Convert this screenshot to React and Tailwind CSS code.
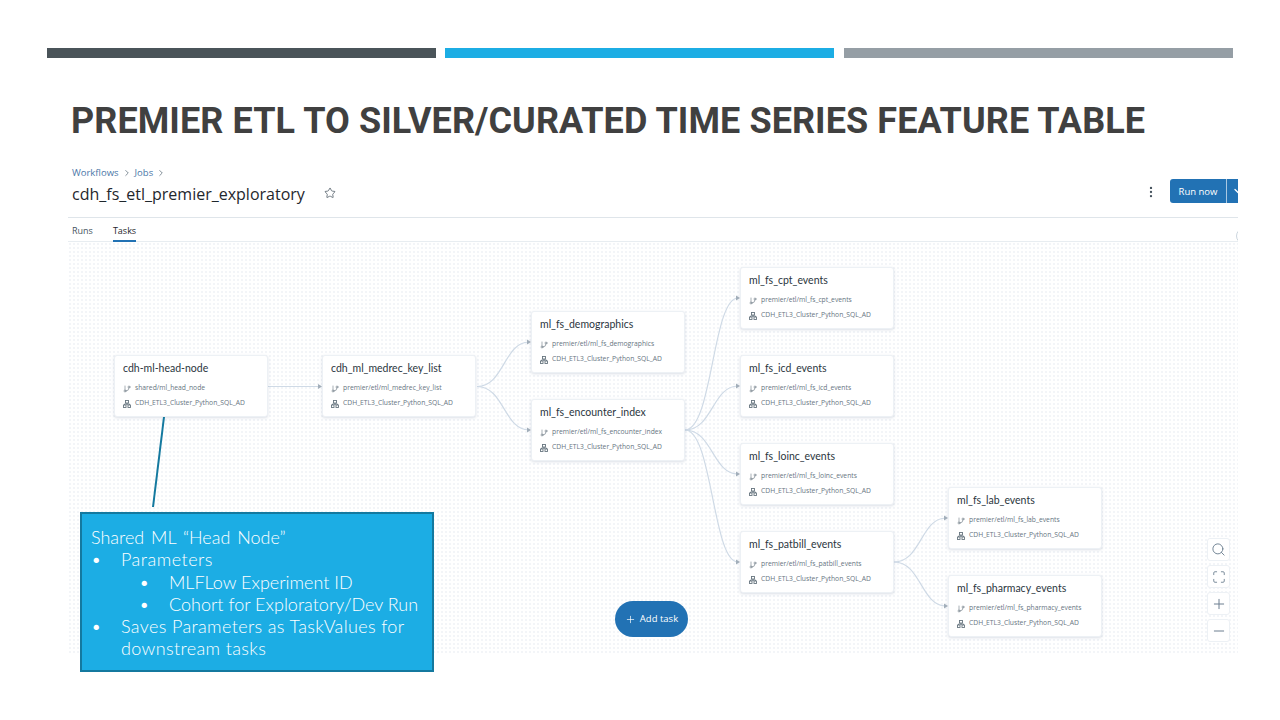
import { Plus, Minus, Search, Maximize, Star, EllipsisVertical, ChevronDown, ChevronRight, GitBranch } from "lucide-react";

const tasks = [
    { name: "cdh-ml-head-node", path: "shared/ml_head_node", pos: "left-[46px] top-[113px]" },
    { name: "cdh_ml_medrec_key_list", path: "premier/etl/ml_medrec_key_list", pos: "left-[254px] top-[113px]" },
    { name: "ml_fs_demographics", path: "premier/etl/ml_fs_demographics", pos: "left-[463px] top-[69px]" },
    { name: "ml_fs_encounter_index", path: "premier/etl/ml_fs_encounter_index", pos: "left-[463px] top-[157px]" },
    { name: "ml_fs_cpt_events", path: "premier/etl/ml_fs_cpt_events", pos: "left-[672px] top-[25px]" },
    { name: "ml_fs_icd_events", path: "premier/etl/ml_fs_icd_events", pos: "left-[672px] top-[113px]" },
    { name: "ml_fs_loinc_events", path: "premier/etl/ml_fs_loinc_events", pos: "left-[672px] top-[201px]" },
    { name: "ml_fs_patbill_events", path: "premier/etl/ml_fs_patbill_events", pos: "left-[672px] top-[289px]" },
    { name: "ml_fs_lab_events", path: "premier/etl/ml_fs_lab_events", pos: "left-[880px] top-[245px]" },
    { name: "ml_fs_pharmacy_events", path: "premier/etl/ml_fs_pharmacy_events", pos: "left-[880px] top-[333px]" },
];

// source right edge -> target left edge, canvas coordinates
const edges = [
    [200, 144.5, 254, 144.5],
    [409, 144.5, 463, 100],
    [409, 144.5, 463, 188],
    [617, 188, 672, 56],
    [617, 188, 672, 144],
    [617, 188, 672, 232],
    [617, 188, 672, 320],
    [826, 320, 880, 276],
    [826, 320, 880, 364],
];

function ClusterIcon() {
    return (
        <svg className="size-[8px] shrink-0" viewBox="0 0 8 8" fill="none" stroke="currentColor" strokeWidth="0.9">
            <rect x="2.5" y="0.5" width="3" height="2.5" />
            <path d="M4 3V5M1.5 5V4H6.5V5" />
            <rect x="0.5" y="5" width="2.5" height="2.5" />
            <rect x="5" y="5" width="2.5" height="2.5" />
        </svg>
    );
}

function TaskNode({ name, path, pos }) {
    return (
        <div className={`absolute ${pos} flex h-[62px] w-[154px] flex-col rounded-[3px] border border-[#edf1f5] bg-white pl-[8px] shadow-[0_1px_3px_rgba(90,110,140,0.22)]`}>
            <div className="mt-[5px] font-['Lato',sans-serif] text-[10.5px] leading-[14px] text-[#2b3640]">{name}</div>
            <div className="mt-[6px] flex h-[15px] items-center gap-[4px] text-[6.75px] text-[#67757f]">
                <GitBranch className="size-[8px] shrink-0" strokeWidth={1.75} />
                <span>{path}</span>
            </div>
            <div className="flex h-[15px] items-center gap-[4px] text-[6.75px] text-[#67757f]">
                <ClusterIcon />
                <span>CDH_ETL3_Cluster_Python_SQL_AD</span>
            </div>
        </div>
    );
}

function Edges() {
    return (
        <svg className="absolute left-0 top-0 h-[420px] w-[1170px]" fill="none">
            {edges.map(([x1, y1, x2, y2], i) => {
                const mid = (x1 + x2) / 2;
                return (
                    <g key={i}>
                        <path d={`M${x1} ${y1}C${mid} ${y1} ${mid} ${y2} ${x2 - 2} ${y2}`} stroke="#cfdae6" strokeWidth="1.2" />
                        <path d={`M${x2 - 4} ${y2 - 2.5}L${x2} ${y2}L${x2 - 4} ${y2 + 2.5}Z`} fill="#a3afba" />
                    </g>
                );
            })}
        </svg>
    );
}

function ZoomButton({ children }) {
    return (
        <button className="flex size-[23px] items-center justify-center rounded-[3px] border border-[#edf1f5] bg-white text-[#6c7f90]">
            {children}
        </button>
    );
}

export default function App() {
    return (
        <div className="relative h-[720px] w-[1280px] overflow-hidden bg-white font-['Open_Sans',sans-serif]">
            <div className="flex gap-[9px] pl-[47px] pt-[48px]">
                <div className="h-[10px] w-[389px] bg-[#4a5459]" />
                <div className="h-[10px] w-[389px] bg-[#1cade4]" />
                <div className="ml-px h-[10px] w-[389px] bg-[#959ea5]" />
            </div>

            <h1 className="ml-[71px] mt-[41px] h-[44px] whitespace-nowrap font-['Roboto',sans-serif] text-[36px] font-bold leading-[44px] tracking-[0.08px] text-[#404040]">
                PREMIER ETL TO SILVER/CURATED TIME SERIES FEATURE TABLE
            </h1>

            <div className="ml-[68px] mt-[21px] flex h-[489px] w-[1170px] flex-col overflow-hidden">
                <div className="flex h-[54px] shrink-0 justify-between border-b border-[#dfe5ea] pl-[4px]">
                    <div className="pt-px">
                        <div className="flex h-[16px] items-center text-[9.5px] text-[#4b77a8]">
                            <span>Workflows</span>
                            <ChevronRight className="mx-[3px] size-[10px] text-[#6b7a86]" />
                            <span>Jobs</span>
                            <ChevronRight className="mx-[3px] size-[10px] text-[#6b7a86]" />
                        </div>
                        <div className="mt-px flex items-center">
                            <span className="text-[16px] leading-[24px] text-[#1f272d]">cdh_fs_etl_premier_exploratory</span>
                            <Star className="ml-[19px] size-[12px] -translate-y-px text-[#46535e]" strokeWidth={1.5} />
                        </div>
                    </div>
                    <div className="flex items-start pt-[15px]">
                        <EllipsisVertical className="mr-[12px] mt-[6px] size-[14px] text-[#46535e]" />
                        <div className="flex h-[24px] w-[68px] shrink-0 overflow-hidden rounded-l-[3px] bg-[#2272b4] text-white">
                            <span className="w-[57px] shrink-0 border-r border-[#a9c8e2] text-center text-[9.5px] leading-[26px]">Run now</span>
                            <ChevronDown className="ml-[5px] mt-[6px] size-[12px] shrink-0" strokeWidth={2.5} />
                        </div>
                    </div>
                </div>

                <div className="relative flex h-[24px] shrink-0 gap-[20px] border-b border-[#e8edf1] pl-[4px] text-[9px] leading-[25px]">
                    <span className="text-[#46535e]">Runs</span>
                    <span className="h-[24px] border-b-2 border-[#2272b4] text-[#1f272d]">Tasks</span>
                    <div className="absolute -right-[14px] top-[10px] size-[16px] rounded-full border border-[#ccd6de] bg-white" />
                </div>

                <div className="relative flex-1 bg-[radial-gradient(#f3f5f8_1px,transparent_1px)] bg-[size:4px_4px]">
                    <Edges />
                    {tasks.map((task) => (
                        <TaskNode key={task.name} {...task} />
                    ))}
                    <button className="absolute left-[547px] top-[359px] flex h-[36px] w-[73px] items-center justify-center gap-[4px] rounded-full bg-[#2272b4] text-[9.5px] text-white">
                        <Plus className="size-[11px]" strokeWidth={1.5} />
                        Add task
                    </button>
                    <div className="absolute left-[1139px] top-[296px] flex flex-col gap-[4px]">
                        <ZoomButton><Search className="size-[15px]" strokeWidth={1.5} /></ZoomButton>
                        <ZoomButton><Maximize className="size-[14px]" strokeWidth={1.5} /></ZoomButton>
                        <ZoomButton><Plus className="size-[16px]" strokeWidth={1.5} /></ZoomButton>
                        <ZoomButton><Minus className="size-[16px]" strokeWidth={1.5} /></ZoomButton>
                    </div>
                </div>
            </div>

            {/* callout over the screenshot */}
            <svg className="absolute left-[148px] top-[415px] h-[95px] w-[20px]" fill="none">
                <path d="M16 2L5 92" stroke="#14799f" strokeWidth="2" />
            </svg>
            <div className="absolute left-[80px] top-[512px] h-[160px] w-[354px] border-2 border-[#14799f] bg-[#1cade4] pl-[9px] pt-[12px] font-['Lato',sans-serif] text-[18px] font-light leading-[22.3px] text-white">
                <div className="[word-spacing:2px]">Shared ML “Head Node”</div>
                <div className="flex"><span className="w-[30px]">•</span><span className="tracking-[0.5px]">Parameters</span></div>
                <div className="flex pl-[48px]"><span className="w-[30px]">•</span>MLFLow Experiment ID</div>
                <div className="flex pl-[48px]"><span className="w-[30px]">•</span>Cohort for Exploratory/Dev Run</div>
                <div className="flex"><span className="w-[30px] shrink-0">•</span><span className="tracking-[0.36px]">Saves Parameters as TaskValues for<br />downstream tasks</span></div>
            </div>
        </div>
    );
}
